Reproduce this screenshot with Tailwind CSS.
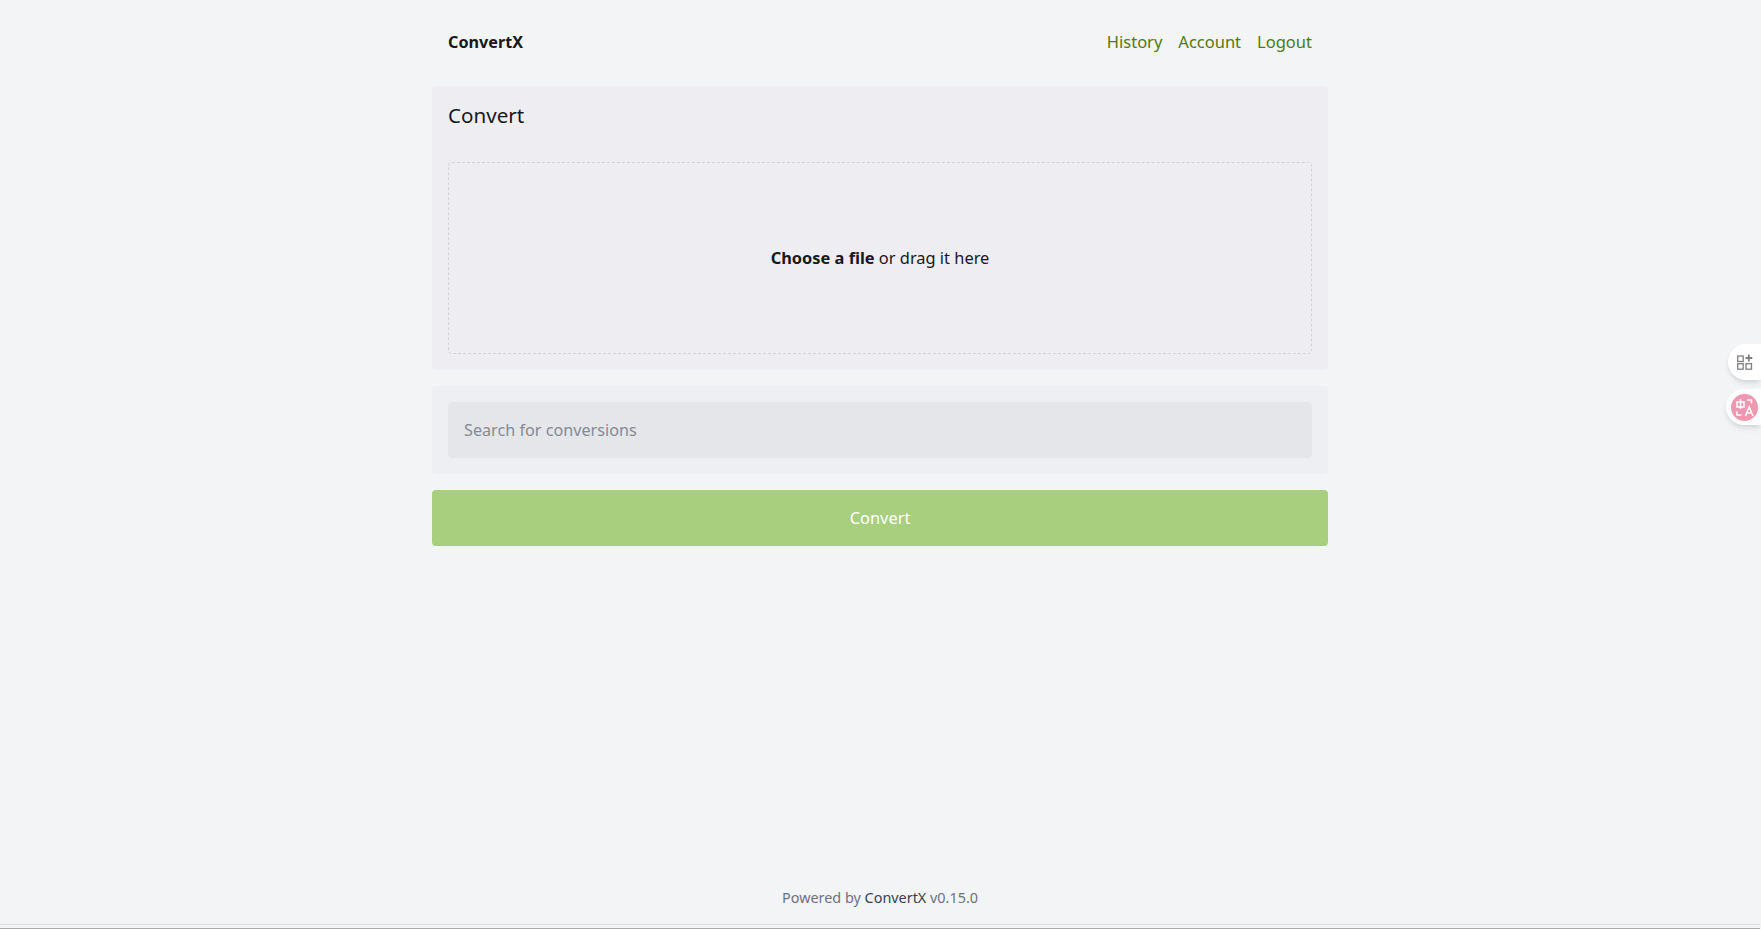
<!DOCTYPE html>
<html lang="en">
<head>
    <meta charset="UTF-8">
    <meta name="viewport" content="width=device-width, initial-scale=1.0">
    <title>ConvertX</title>
    <script src="https://cdn.jsdelivr.net/npm/@tailwindcss/browser@4"></script>
</head>
<body class="bg-[#f3f4f6] font-['Noto_Sans',sans-serif] text-[#18181b] overflow-hidden">
    <div class="relative flex h-[929px] flex-col pr-px">
        <div class="flex h-[924px] flex-col">
            <!-- Header -->
            <header class="mx-auto w-[896px] px-4 pb-[2px] h-[86px] flex items-center justify-between">
                <a href="#" class="text-[16.2px] font-bold">ConvertX</a>
                <nav class="flex gap-4 text-[16.5px] text-[#4d7c0f]">
                    <a href="#">History</a>
                    <a href="#">Account</a>
                    <a href="#">Logout</a>
                </nav>
            </header>

            <main class="mx-auto flex w-[896px] flex-col gap-4">
                <!-- Upload card -->
                <section class="rounded bg-[#eeeef2] p-4 h-[284px] flex flex-col">
                    <h1 class="text-[20.6px] leading-7 -mt-px">Convert</h1>
                    <div class="mt-[33px] flex h-[192px] items-center justify-center rounded border border-dashed border-[#d4d4d8]">
                        <p class="text-[16.4px]"><b class="font-bold">Choose a file</b> or drag it here</p>
                    </div>
                </section>

                <!-- Search card -->
                <section class="rounded bg-[#eeeff3] p-4 h-[88px]">
                    <input type="search" placeholder="Search for conversions" class="h-[56px] w-full rounded bg-[#e5e6ea] px-4 text-[16.2px] outline-none placeholder:text-[#858a94]">
                </section>

                <button class="h-[56px] rounded bg-[#a8cf7d] text-[16.4px] text-white">Convert</button>
            </main>

            <footer class="mt-auto h-[37px] text-center text-[14.4px] text-[#6b7280]">
                Powered by <a href="#" class="text-[#374151]">ConvertX</a> v0.15.0
            </footer>
        </div>
        <div class="h-[5px] border-t border-b border-t-[#dedede] border-b-[#aaaaaa] bg-[#f3f4f6]"></div>

        <!-- Browser extension buttons -->
        <div class="absolute right-0 top-[344px] flex h-[36px] w-[33px] items-center rounded-l-full bg-white pl-[9px] shadow-md">
            <svg width="16" height="16" viewBox="0 0 16 16" fill="none" stroke="#808080" stroke-width="1.300">
                <rect x="0.700" y="2" width="5.500" height="5.500"/>
                <rect x="0.700" y="9.700" width="5.500" height="5.500"/>
                <rect x="9" y="9.700" width="5.500" height="5.500"/>
                <path d="M11.800 0.500v7M8.500 4h6.800" stroke-width="1.800"/>
            </svg>
        </div>
        <div class="absolute right-0 top-[389px] flex h-[36px] w-[35px] items-center rounded-l-full bg-white pl-[5px] shadow-md">
            <svg width="27" height="27" viewBox="0 0 27 27" fill="none">
                <circle cx="13.500" cy="13.500" r="13.500" fill="#ef96b0"/>
                <g stroke="#fff" stroke-width="1.500">
                    <path d="M6 8h7v5H6zM9.500 5v10"/>
                    <path d="M16 6h4.500v3.500M6 17.500V21h4.500"/>
                    <path d="M14.500 22l3.700-9 3.700 9M15.800 19h4.800"/>
                </g>
            </svg>
        </div>
    </div>
</body>
</html>
